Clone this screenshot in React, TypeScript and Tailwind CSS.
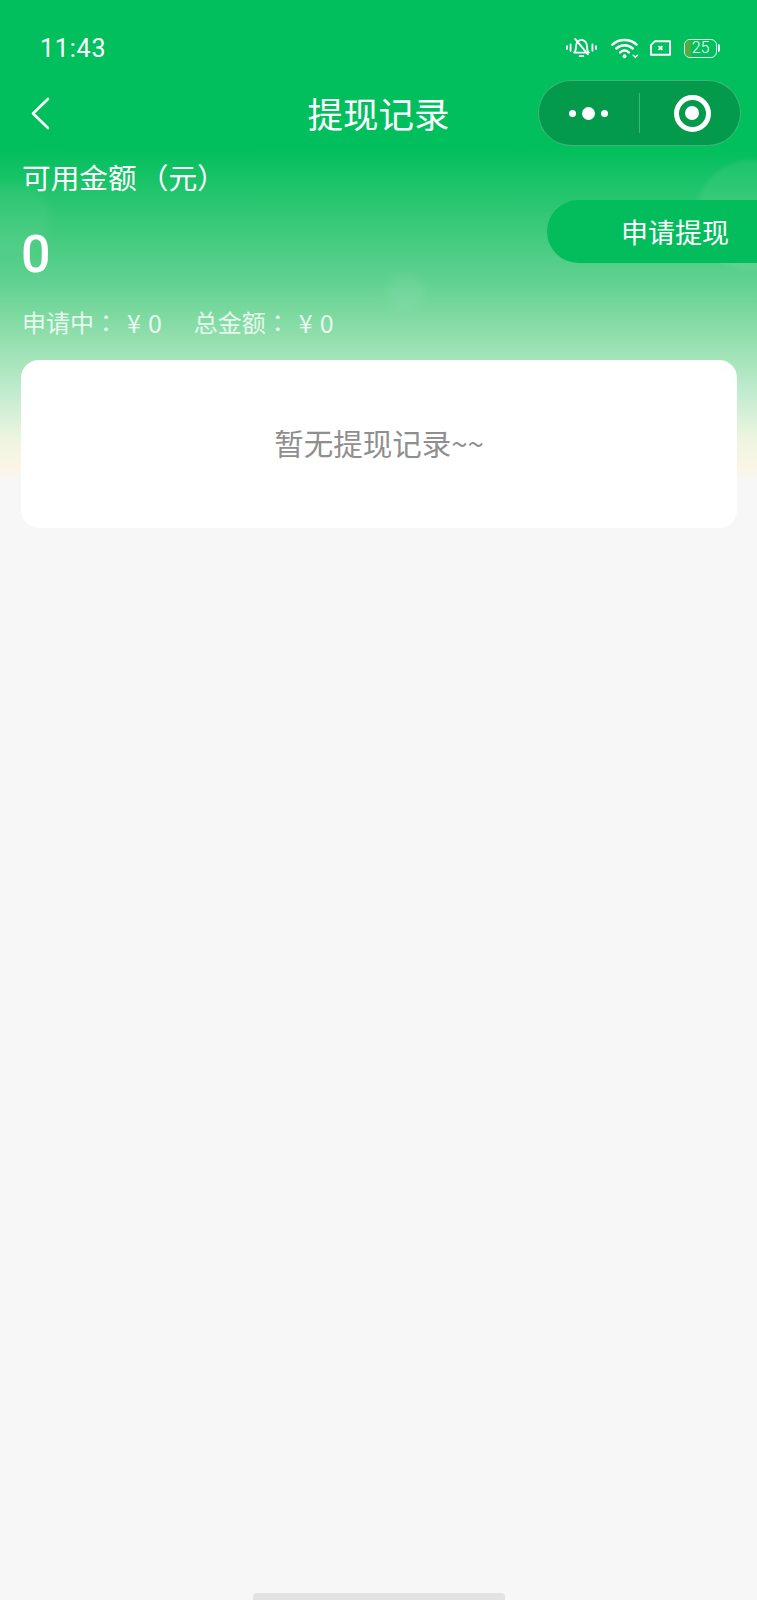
export default function App() {
  return (
    <div className="relative flex min-h-[1600px] w-full flex-col overflow-hidden bg-[linear-gradient(to_bottom,#02bf5d_0px,#02bf5d_150px,#2cc671_205px,#5fd18f_280px,#93dfae_340px,#c4ecd0_395px,#eef5e0_440px,#fbf5e6_467px,#f7f7f7_482px,#f7f7f7_100%)] font-['Noto_Sans_CJK_SC',sans-serif] text-white">
      <div className="absolute left-[-30px] top-[185px] h-[70px] w-[80px] rounded-full bg-white/5 blur-[4px]" />
      <div className="absolute left-[696px] top-[160px] h-[110px] w-[110px] rounded-full bg-white/[0.07] blur-[2px]" />
      <div className="absolute left-[386px] top-[272px] h-[40px] w-[40px] rounded-full bg-white/[0.06] blur-[5px]" />

      <div className="relative flex h-[80px] items-center justify-between pl-[40px] pr-[37px] pt-[16px]">
        <span className="font-['Roboto',sans-serif] text-[25px] leading-none tracking-[0.8px]">11:43</span>
        <div className="flex items-center">
          <svg width="31" height="24" viewBox="0 0 34 24" fill="none" stroke="white" strokeWidth="2" strokeLinecap="round" strokeLinejoin="round">
            <path d="M1 10v3M5 8v7M29 8v7M33 10v3" />
            <path d="M9 17c2-2 2-4 2-7 0-4 3-7 6-7s6 3 6 7c0 3 0 5 2 7z" />
            <path d="M10 2l14 17" />
            <path d="M15 21h4" />
          </svg>
          <svg className="ml-[14px]" width="28" height="22" viewBox="0 0 29 22" fill="none" stroke="white" strokeWidth="2.600" strokeLinecap="round">
            <path d="M1.500 7.500C8 1 20 1 26.500 7.500" />
            <path d="M5.500 11.500c5-4.500 12-4.500 17 0" />
            <path d="M9.500 15.500c3-2.500 6-2.500 9 0" />
            <circle cx="14" cy="19.500" r="2" fill="white" stroke="none" />
            <path d="M23 18.500l2.200 2 2.200-2" strokeWidth="1.500" />
          </svg>
          <svg className="ml-[11px]" width="21" height="16" viewBox="0 0 22 16" fill="none" stroke="white" strokeWidth="2" strokeLinejoin="round">
            <path d="M5 1h16v14H1V5z" />
            <path d="M9 6l4 4M13 6l-4 4" />
          </svg>
          <div className="relative ml-[13px] flex h-[19px] w-[33px] items-center justify-center overflow-hidden rounded-[6px] border-[1.500px] border-white/90">
            <div className="absolute bottom-0 left-0 top-0 w-[6px] bg-[#4fae3f]" />
            <span className="relative font-['Roboto',sans-serif] text-[16px] font-light leading-none">25</span>
          </div>
          <div className="ml-[1px] h-[8px] w-[2px] rounded-r-full bg-white/90" />
        </div>
      </div>

      <div className="relative grid h-[66px] grid-cols-[219px_1fr_219px] items-center">
        <div className="flex items-center pl-[30px]">
          <svg width="20" height="33" viewBox="0 0 20 33" fill="none" stroke="white" strokeWidth="2.600" strokeLinecap="round" strokeLinejoin="round">
            <path d="M18 2L3 16.500 18 31" />
          </svg>
        </div>
        <span className="text-center text-[35.500px] leading-none">提现记录</span>
        <div className="flex justify-end pr-[16px]">
          <div className="flex h-[66px] w-[203px] items-center rounded-full border border-white/25 bg-[#049a4b]">
            <div className="flex flex-1 items-center justify-center gap-[6px] pl-[1px] pr-[3px]">
              <span className="h-[7px] w-[7px] rounded-full bg-white" />
              <span className="h-[13px] w-[13px] rounded-full bg-white" />
              <span className="h-[7px] w-[7px] rounded-full bg-white" />
            </div>
            <div className="h-[40px] w-px bg-white/25" />
            <div className="flex flex-1 items-center justify-center pl-[4px]">
              <div className="flex h-[37px] w-[37px] items-center justify-center rounded-full border-[5px] border-white">
                <span className="h-[14px] w-[14px] rounded-full bg-white" />
              </div>
            </div>
          </div>
        </div>
      </div>

      <div className="relative mt-[12px] flex items-start justify-between pl-[22px]">
        <div className="flex flex-col">
          <span className="text-[28.700px] leading-[38px]">
            可用金额<span className="ml-[3px]">（元）</span>
          </span>
          <span className="ml-[-1px] mt-[29px] font-['Roboto',sans-serif] text-[52px] font-medium leading-[60px]">0</span>
          <div className="mt-[20px] flex gap-[25px] text-[24px] leading-[34px] text-white/80">
            <span className="flex">
              申请中<span className="font-['Noto_Sans_CJK_TC',sans-serif]">：</span>
              <span className="ml-[9px] text-[25px] tracking-[7px]">¥0</span>
            </span>
            <span className="flex">
              总金额<span className="font-['Noto_Sans_CJK_TC',sans-serif]">：</span>
              <span className="ml-[9px] text-[25px] tracking-[7px]">¥0</span>
            </span>
          </div>
        </div>
        <div className="mt-[42px] flex h-[63px] w-[210px] items-center rounded-l-full bg-[#03bd5c] pl-[74px] text-[27px] leading-none">
          申请提现
        </div>
      </div>

      <div className="relative ml-[21px] mr-[20px] mt-[21px] flex h-[168px] items-center justify-center rounded-[18px] bg-white pb-[2px] text-[29.500px] leading-none text-[#8f8f8f]">
        暂无提现记录~~
      </div>

      <div className="mx-auto mt-auto h-[7px] w-[252px] rounded-t-[4px] bg-[#e3e3e3]" />
    </div>
  );
}
